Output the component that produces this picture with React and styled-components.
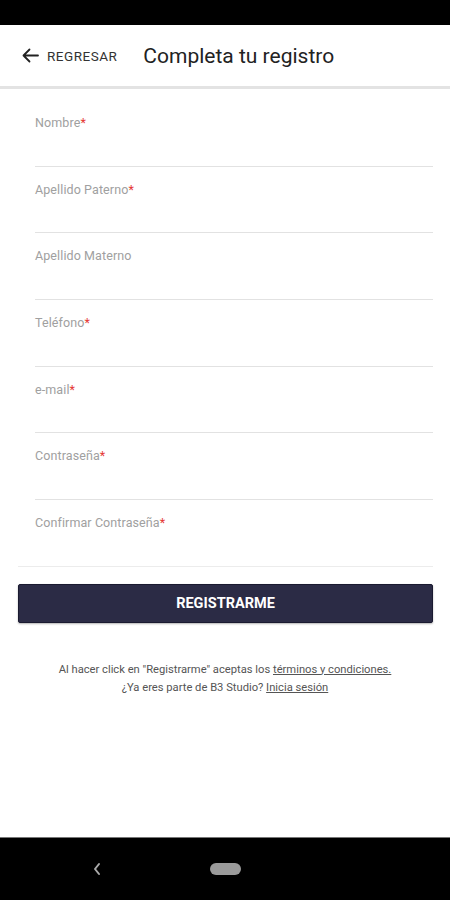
import styled, { createGlobalStyle } from "styled-components"

const GlobalStyle = createGlobalStyle`
  body {
    margin: 0;
    font-family: Roboto, "Liberation Sans", sans-serif;
    background: #fff;
  }
`

const Page = styled.div`
  min-height: 900px;
  display: flex;
  flex-direction: column;
`

const StatusBar = styled.div`
  height: 25px;
  background: #000;
`

const Header = styled.header`
  height: 61px;
  display: flex;
  align-items: center;
  padding-left: 22px;
  border-bottom: 3px solid #e3e3e3;
`

const BackButton = styled.button`
  display: flex;
  align-items: center;
  gap: 8px;
  background: none;
  border: none;
  padding: 0;
  color: #333;
  font-family: Roboto, sans-serif;
  font-size: 13.5px;
  letter-spacing: 0.5px;
  text-transform: uppercase;
`

const Title = styled.h1`
  margin: 0 0 0 26px;
  font-size: 21px;
  font-weight: 400;
  color: #222;
`

const Main = styled.main`
  flex: 1;
  display: flex;
  flex-direction: column;
`

const Fields = styled.div`
  margin: 11px 17px 0 35px;
`

const Field = styled.label`
  display: block;
  height: 66.67px;
  box-sizing: border-box;
  padding-top: 12px;
  border-bottom: 1px solid #e2e2e2;
`

const Label = styled.span`
  font-size: 12.5px;
  line-height: 15px;
  letter-spacing: 0.1px;
  color: #a0a0a0;
`

const Required = styled.span`
  color: #e53935;
`

const Divider = styled.div`
  height: 1px;
  background: #ececec;
  margin: -1px 17px 0 18px;
`

const SubmitButton = styled.button`
  margin: 17px 17px 0 18px;
  height: 39px;
  background: #2b2b45;
  border: 1px solid #1a1a30;
  border-radius: 2px;
  box-shadow: 0 1px 2px rgba(0, 0, 0, 0.3);
  color: #fff;
  font-family: Roboto, sans-serif;
  font-weight: 700;
  font-size: 14.5px;
`

const Legal = styled.p`
  margin: 38px 0 0;
  text-align: center;
  font-size: 11.2px;
  line-height: 18px;
  color: #555;
`

const Link = styled.a`
  color: #555;
  text-decoration: underline;
`

const NavBar = styled.nav`
  height: 62px;
  background: #000;
  border-top: 1px solid #777;
  display: flex;
  align-items: center;
  padding-left: 92px;
  gap: 108px;
`

const HomePill = styled.div`
  width: 31px;
  height: 12px;
  border-radius: 6px;
  background: #9a9a9a;
`

const fields = [
  { label: "Nombre", required: true },
  { label: "Apellido Paterno", required: true },
  { label: "Apellido Materno", required: false },
  { label: "Teléfono", required: true },
  { label: "e-mail", required: true },
  { label: "Contraseña", required: true },
  { label: "Confirmar Contraseña", required: true },
]

const App = () => {
  return (
    <Page>
      <GlobalStyle />
      <StatusBar />
      <Header>
        <BackButton>
          <svg width="17" height="15" viewBox="0 0 17 15" fill="none" stroke="#222" strokeWidth="1.8" strokeLinecap="round" strokeLinejoin="round">
            <path d="M16 7.5H1.5M7.5 1.5L1.5 7.5l6 6" />
          </svg>
          Regresar
        </BackButton>
        <Title>Completa tu registro</Title>
      </Header>
      <Main>
        <Fields>
          {fields.map((f) => (
            <Field key={f.label}>
              <Label>
                {f.label}
                {f.required && <Required>*</Required>}
              </Label>
            </Field>
          ))}
        </Fields>
        <Divider />
        <SubmitButton>REGISTRARME</SubmitButton>
        <Legal>
          Al hacer click en "Registrarme" aceptas los <Link>términos y condiciones.</Link>
          <br />
          ¿Ya eres parte de B3 Studio? <Link>Inicia sesión</Link>
        </Legal>
      </Main>
      <NavBar>
        <svg width="10" height="14" viewBox="0 0 10 14" fill="none" stroke="#aaa" strokeWidth="2" strokeLinecap="round" strokeLinejoin="round">
          <path d="M7 2L3 7l4 5" />
        </svg>
        <HomePill />
      </NavBar>
    </Page>
  )
}

export default App
